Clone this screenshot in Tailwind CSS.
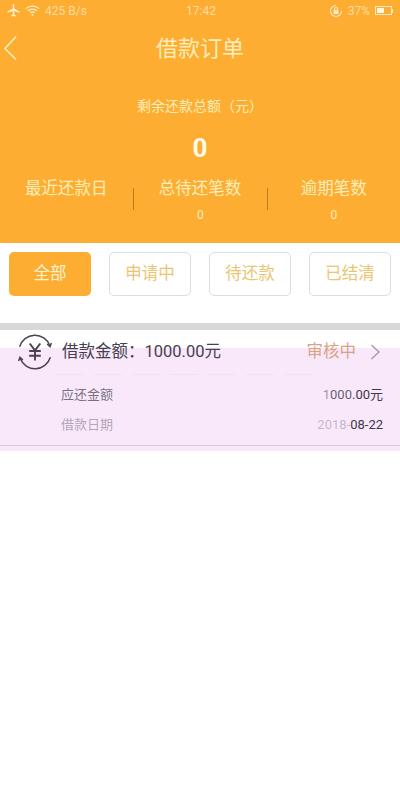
<!DOCTYPE html>
<html lang="zh">
<head>
    <meta charset="UTF-8">
    <meta name="viewport" content="width=device-width, initial-scale=1.0">
    <title>借款订单</title>
    <script src="https://cdn.jsdelivr.net/npm/@tailwindcss/browser@4"></script>
</head>
<body class="bg-white font-['Roboto','Noto_Sans_CJK_SC',sans-serif]">
    <div class="w-[400px] h-[800px] overflow-hidden bg-white">
        <!-- Header -->
        <div class="h-[243px] bg-[#fead33] text-[#fdeeb9]">
            <!-- Status bar -->
            <div class="relative h-[21px] flex items-center justify-between pl-[7px] pr-[7px] text-[12px] text-[#fddca0]">
                <div class="flex items-center gap-[5px]">
                    <svg class="w-[13px] h-[13px]" viewBox="0 0 14 14" fill="#fdeec9"><path d="M6.2 1.2c0-.6.4-1.2.8-1.2s.8.6.8 1.2v3.6l5.7 3.3v1.4L7.8 7.9v3.2l1.6 1.2V13.600L7 13l-2.400.6v-1.300l1.600-1.200V7.900L.5 9.500V8.100l5.700-3.300z"/></svg>
                    <svg class="w-[15px] h-[13px]" viewBox="0 0 16 13" fill="none" stroke="#fdeec9" stroke-width="1.300"><path d="M1 4.500c3.800-3.600 10.200-3.600 14 0M3.200 6.800c2.600-2.400 7-2.400 9.600 0M5.400 9c1.400-1.200 3.800-1.200 5.200 0"/><circle cx="8" cy="11" r="1" fill="#fdeec9" stroke="none"/></svg>
                    <span>425 B/s</span>
                </div>
                <span class="absolute left-[186px]">17:42</span>
                <div class="flex items-center gap-[5px]">
                    <svg class="w-[14px] h-[14px]" viewBox="0 0 14 14" fill="none" stroke="#fdeec9" stroke-width="1.100"><path d="M12.500 7A5.500 5.500 0 1 1 7 1.500"/><rect x="4.600" y="6.200" width="4.800" height="3.800" fill="#fdeec9" stroke="none"/><path d="M5.500 6.200V5a1.500 1.500 0 0 1 3 0v1.200"/></svg>
                    <span>37%</span>
                    <div class="flex items-center">
                        <div class="w-[17px] h-[9px] border border-[#fdeec9] p-px"><div class="w-[7px] h-full bg-[#fff6e0]"></div></div>
                        <div class="w-px h-[4px] bg-[#fdeec9]"></div>
                    </div>
                </div>
            </div>
            <!-- Title bar -->
            <div class="relative h-[56px] flex items-center justify-center">
                <svg class="absolute left-[3px] top-[14px] w-[14px] h-[26px]" viewBox="0 0 14 26" fill="none" stroke="#fdeeb9" stroke-width="1.600"><path d="M13 1.500 2 13.500l11 11"/></svg>
                <span class="text-[22px] leading-none">借款订单</span>
            </div>
            <!-- Summary -->
            <p class="mt-[19px] text-center text-[14px] leading-[20px]">剩余还款总额（元）</p>
            <p class="mt-[16px] text-center text-[26px] leading-[32px] font-bold text-[#fffbe8]">0</p>
            <div class="mt-[13px] grid grid-cols-3">
                <div class="text-center">
                    <p class="text-[16.500px] leading-[24px] -ml-[1px]">最近还款日</p>
                </div>
                <div class="text-center border-l border-[#b87f1f] mt-[11px] h-[22px]">
                    <p class="text-[16.500px] leading-[24px] -mt-[11px] -ml-[1px]">总待还笔数</p>
                    <p class="mt-[6px] text-[12px] leading-[16px]">0</p>
                </div>
                <div class="text-center border-l border-[#b87f1f] mt-[11px] h-[22px]">
                    <p class="text-[16.500px] leading-[24px] -mt-[11px]">逾期笔数</p>
                    <p class="mt-[6px] text-[12px] leading-[16px]">0</p>
                </div>
            </div>
        </div>
        <!-- Tabs -->
        <div class="h-[80px] pt-[9px] px-[9px] flex gap-[18px] text-[16.500px]">
            <div class="w-[82px] h-[44px] rounded-[5px] bg-[#fead33] text-[#fdf3d0] flex items-center justify-center">全部</div>
            <div class="w-[82px] h-[44px] rounded-[5px] border border-[#dddde6] text-[#e8c672] flex items-center justify-center">申请中</div>
            <div class="w-[82px] h-[44px] rounded-[5px] border border-[#dddde6] text-[#e8c672] flex items-center justify-center">待还款</div>
            <div class="w-[82px] h-[44px] rounded-[5px] border border-[#dddde6] text-[#e8c672] flex items-center justify-center">已结清</div>
        </div>
        <div class="h-[7px] bg-[#d8d8d8]"></div>
        <!-- Order -->
        <div class="h-[121px] bg-[linear-gradient(#fff_18px,#f8e8fa_18px)]">
            <div class="h-[44px] pl-[17px] pr-[20px] flex items-center">
                <svg class="w-[36px] h-[36px]" viewBox="0 0 34 34" fill="none" stroke="#4a4250" stroke-width="1.400"><path d="M2.500 12A15 15 0 0 1 31 11"/><path d="M31.500 22A15 15 0 0 1 3 23"/><path d="M28.500 9.500 31.200 12l1.300-3.400M5.500 24.500 2.800 22l-1.300 3.400"/><path d="M12 9l5 6.500 5-6.500M17 15.500V25M11.500 16h11M11.500 20.500h11" stroke-width="1.800"/></svg>
                <span class="ml-[9px] text-[16.500px] text-[#47414f]">借款金额：1000.00元</span>
                <span class="ml-auto text-[16.500px] text-[#dba183]">审核中</span>
                <svg class="ml-[14px] w-[10px] h-[16px]" viewBox="0 0 10 16" fill="none" stroke="#a89ca8" stroke-width="1.500"><path d="M1.500 1 9 8l-7.500 7"/></svg>
            </div>
            <div class="ml-[56px] mr-[80px] h-px bg-[repeating-linear-gradient(90deg,#efe2f0_0_28px,transparent_28px_38px)]"></div>
            <div class="pl-[61px] pr-[17px] pt-[10px] h-[71px] text-[13px] leading-[20px] text-[#40394a] border-b border-[#dccbdd]">
                <div class="flex justify-between"><span class="text-[#40394a]/70">应还金额</span><span><span class="text-[#40394a]/50">1</span><span class="text-[#40394a]/80">000</span>.00元</span></div>
                <div class="mt-[10px] flex justify-between"><span class="text-[#40394a]/40">借款日期</span><span><span class="text-[#40394a]/30">2018-</span>08-22</span></div>
            </div>
        </div>
    </div>
</body>
</html>
